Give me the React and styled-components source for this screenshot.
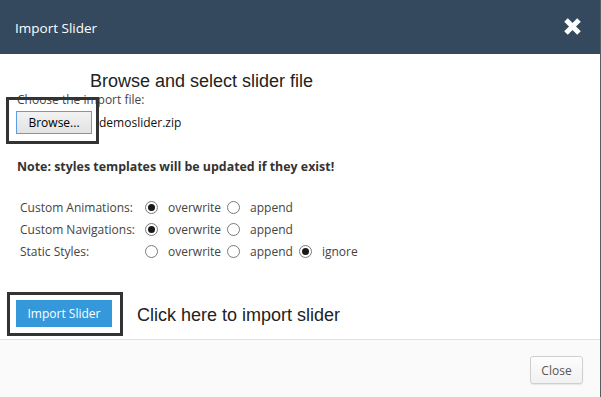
import React from "react";
import styled, { createGlobalStyle } from "styled-components";

const Global = createGlobalStyle`
  html, body { margin: 0; padding: 0; background: #fff; overflow: hidden; }
  body { font-family: "Open Sans", "Liberation Sans", sans-serif; }
  * { box-sizing: border-box; }
`;

const Dialog = styled.div`
  width: 601px;
  height: 397px;
  display: flex;
  flex-direction: column;
  border-right: 1px solid #5c5c5c;
  background: #fff;
`;

const Header = styled.div`
  height: 54px;
  flex: none;
  background: #35495e;
  display: flex;
  align-items: center;
  justify-content: space-between;
  padding: 0 18px 0 15px;
`;

const Title = styled.span`
  color: #fff;
  font-size: 13.5px;
  padding-top: 2px;
`;

const CloseIcon = styled.svg`
  width: 19px;
  height: 19px;
  display: block;
  margin-top: -2px;
`;

const Body = styled.div`
  flex: 1;
  padding: 17px 17px 0 17px;
  display: flex;
  flex-direction: column;
`;

const Heading = styled.div`
  font-family: "Liberation Sans", Arial, sans-serif;
  font-size: 18px;
  line-height: 21px;
  color: #222;
  margin-left: 73px;
`;

const FileSection = styled.div`
  position: relative;
`;

const Caption = styled.div`
  font-size: 12px;
  line-height: 16px;
  color: #444;
`;

const FileRow = styled.div`
  display: flex;
  align-items: center;
  gap: 7px;
  margin-top: 3px;
  margin-left: -1px;
`;

const BrowseButton = styled.button`
  width: 76px;
  height: 23px;
  padding: 0;
  font-family: "Open Sans", sans-serif;
  font-size: 12px;
  color: #000;
  border: 1px solid #5e9de0;
  border-radius: 0;
  background: linear-gradient(#f2f2f2, #e3e3e3);
`;

const FileName = styled.span`
  font-size: 12px;
  color: #111;
`;

const Annotation = styled.div`
  position: absolute;
  left: -11px;
  top: 5px;
  width: 93px;
  height: 47px;
  border: 3px solid #333;
  pointer-events: none;
`;

const Note = styled.div`
  margin-top: 24px;
  font-size: 12.4px;
  line-height: 18px;
  font-weight: 700;
  color: #333;
`;

const OptionsGrid = styled.div`
  margin-top: 20px;
  margin-left: 3px;
  display: grid;
  grid-template-columns: 124px auto auto auto;
  justify-content: start;
  grid-auto-rows: 22px;
  align-items: center;
  font-size: 12px;
  color: #444;
`;

const OptionLabel = styled.span`
  grid-column: 1;
`;

const Option = styled.label`
  display: inline-flex;
  align-items: center;
  margin-right: 5px;
`;

const Radio = styled.span`
  width: 13px;
  height: 13px;
  border-radius: 50%;
  border: 1px solid #7a7a7a;
  background: #fff;
  margin: 0 10px 0 1px;
  display: inline-flex;
  align-items: center;
  justify-content: center;
  &::after {
    content: "";
    width: 7px;
    height: 7px;
    border-radius: 50%;
    background: ${(p) => (p.$checked ? "#1a1a1a" : "transparent")};
  }
`;

const ImportRow = styled.div`
  margin-top: auto;
  margin-bottom: 3px;
  margin-left: -10px;
  display: flex;
  align-items: center;
  gap: 14px;
`;

const ImportBox = styled.div`
  width: 116px;
  height: 44px;
  border: 3px solid #333;
  padding: 5px 0 0 6px;
`;

const PrimaryButton = styled.button`
  width: 96px;
  height: 27px;
  padding: 0;
  border: none;
  background: #3498db;
  color: #fff;
  font-family: "Open Sans", sans-serif;
  font-size: 12px;
`;

const Hint = styled.span`
  font-family: "Liberation Sans", Arial, sans-serif;
  font-size: 18px;
  color: #222;
  margin-top: 2px;
`;

const Footer = styled.div`
  height: 58px;
  flex: none;
  border-top: 1px solid #e3e3e3;
  background: #fafafa;
  display: flex;
  justify-content: flex-end;
  align-items: flex-start;
  padding: 16px 17px 0 0;
`;

const SecondaryButton = styled.button`
  width: 53px;
  height: 28px;
  padding: 0;
  border: 1px solid #cfcfcf;
  border-radius: 3px;
  background: linear-gradient(#fdfdfd, #f1f1f1);
  box-shadow: 0 1px 1px rgba(0, 0, 0, 0.08);
  font-family: "Open Sans", sans-serif;
  font-size: 12px;
  color: #555;
`;

const rows = [
  { label: "Custom Animations:", options: [["overwrite", true], ["append", false]] },
  { label: "Custom Navigations:", options: [["overwrite", true], ["append", false]] },
  { label: "Static Styles:", options: [["overwrite", false], ["append", false], ["ignore", true]] },
];

export default function App() {
  return (
    <>
      <Global />
      <Dialog>
        <Header>
          <Title>Import Slider</Title>
          <CloseIcon viewBox="0 0 19 19">
            <path d="M3 3 L16 16 M16 3 L3 16" stroke="#fff" strokeWidth="5" fill="none" />
          </CloseIcon>
        </Header>
        <Body>
          <Heading>Browse and select slider file</Heading>
          <FileSection>
            <Caption>Choose the import file:</Caption>
            <FileRow>
              <BrowseButton>Browse...</BrowseButton>
              <FileName>demoslider.zip</FileName>
            </FileRow>
            <Annotation />
          </FileSection>
          <Note>Note: styles templates will be updated if they exist!</Note>
          <OptionsGrid>
            {rows.map((r) => (
              <React.Fragment key={r.label}>
                <OptionLabel>{r.label}</OptionLabel>
                {r.options.map(([name, checked]) => (
                  <Option key={name}>
                    <Radio $checked={checked} />
                    {name}
                  </Option>
                ))}
              </React.Fragment>
            ))}
          </OptionsGrid>
          <ImportRow>
            <ImportBox>
              <PrimaryButton>Import Slider</PrimaryButton>
            </ImportBox>
            <Hint>Click here to import slider</Hint>
          </ImportRow>
        </Body>
        <Footer>
          <SecondaryButton>Close</SecondaryButton>
        </Footer>
      </Dialog>
    </>
  );
}
